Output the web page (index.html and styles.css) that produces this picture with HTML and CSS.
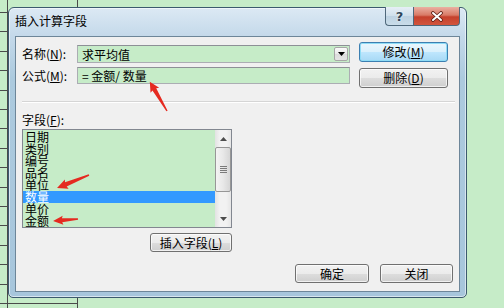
FILE: index.html
```html
<!DOCTYPE html>
<html lang="zh-CN">
<head>
  <meta charset="UTF-8">
  <meta name="viewport" content="width=device-width, initial-scale=1.0">
  <title>插入计算字段</title>
  <link rel="stylesheet" href="styles.css">
</head>
<body>
  <div class="window">
    <div class="titlebar">
      <span class="title">插入计算字段</span>
      <div class="caption">
        <span class="cap-help">?</span>
        <span class="cap-close">
          <svg width="14" height="11" viewBox="0 0 14 11">
            <path d="M3 2 L11 9 M11 2 L3 9" stroke="#5a1c12" stroke-width="3.6" stroke-linecap="round"/>
            <path d="M3 2 L11 9 M11 2 L3 9" stroke="#fff" stroke-width="2" stroke-linecap="round"/>
          </svg>
        </span>
      </div>
    </div>

    <div class="client">
      <div class="top">
        <div class="fields">
          <div class="row">
            <label>名称(<u>N</u>):</label>
            <div class="combo">
              <span>求平均值</span>
              <span class="drop">
                <svg width="7" height="4" viewBox="0 0 7 4"><polygon points="0,0 7,0 3.5,4" fill="#000"/></svg>
              </span>
            </div>
          </div>
          <div class="row">
            <label>公式(<u>M</u>):</label>
            <div class="textbox">= 金额/ 数量</div>
          </div>
        </div>
        <div class="side">
          <button class="btn default">修改(<u>M</u>)</button>
          <button class="btn">删除(<u>D</u>)</button>
        </div>
      </div>

      <div class="separator"></div>

      <div class="list-label">字段(<u>F</u>):</div>
      <div class="listbox">
        <div class="items">
          <div class="item">日期</div>
          <div class="item">类别</div>
          <div class="item">编号</div>
          <div class="item">品名</div>
          <div class="item">单位</div>
          <div class="item selected">数量</div>
          <div class="item">单价</div>
          <div class="item">金额</div>
        </div>
        <div class="scrollbar">
          <div class="sb-arrow">
            <svg width="7" height="4" viewBox="0 0 7 4"><polygon points="0,4 7,4 3.5,0" fill="#4d4d4d"/></svg>
          </div>
          <div class="sb-thumb"><span class="grip"></span></div>
          <div class="sb-track"></div>
          <div class="sb-arrow">
            <svg width="7" height="4" viewBox="0 0 7 4"><polygon points="0,0 7,0 3.5,4" fill="#4d4d4d"/></svg>
          </div>
        </div>
      </div>

      <div class="insert-row">
        <button class="btn insert">插入字段(<u>L</u>)</button>
      </div>

      <div class="bottom-row">
        <button class="btn ok">确定</button>
        <button class="btn close">关闭</button>
      </div>
    </div>
  </div>

  <!-- red annotation arrows -->
  <svg class="marks" width="504" height="308" viewBox="0 0 504 308">
    <g fill="#e52a20">
      <polygon transform="translate(167 111) rotate(-120.4)" points="0,-0.7 25,-2.2 24,-5 34,0 24,5 25,2.2 0,0.7"/>
      <polygon transform="translate(89 175) rotate(157.9)" points="0,-0.7 25,-2.2 24,-5 34.5,0 24,5 25,2.2 0,0.7"/>
      <polygon transform="translate(78 219) rotate(175.4)" points="0,-0.7 16,-2 15,-4.5 25,0 15,4.5 16,2 0,0.7"/>
    </g>
  </svg>
</body>
</html>
```

FILE: styles.css
```css
html, body {
  margin: 0;
}
body {
  position: relative;
  box-sizing: border-box;
  width: 504px;
  height: 308px;
  overflow: hidden;
  padding: 7px 0 0 8px;
  font-family: "Noto Sans CJK SC", "Noto Sans", sans-serif;
  font-size: 12px;
  color: #000;
  background:
    linear-gradient(#4a4a4a, #4a4a4a) 7px 0 / 1px 100% no-repeat,
    linear-gradient(#4a4a4a, #4a4a4a) 77px 0 / 1px 100% no-repeat,
    repeating-linear-gradient(to bottom, transparent 0 12px, #4a4a4a 12px 13px, transparent 13px 19.4px) 0 0 / 78px 100% no-repeat,
    #c6ecc8;
}
u {
  text-decoration: underline;
}

/* window frame */
.window {
  box-sizing: border-box;
  width: 459px;
  height: 291px;
  border: 1px solid #3c5a6e;
  border-radius: 6px 6px 5px 5px;
  padding: 0 6px 5px;
  background: linear-gradient(#dce9f4, #c4d9ea 28px, #accade 70px, #a7c6dc);
  box-shadow: inset 0 0 0 1px rgba(255, 255, 255, 0.55);
}
.titlebar {
  display: flex;
  align-items: flex-start;
  height: 28px;
}
.title {
  margin-top: 6px;
  line-height: 14px;
}
.caption {
  display: flex;
  margin-left: auto;
  margin-top: -1px;
  height: 19px;
}
.cap-help,
.cap-close {
  box-sizing: border-box;
  display: flex;
  align-items: center;
  justify-content: center;
  height: 19px;
  border: 1px solid #4f687b;
  border-top: none;
}
.cap-help {
  width: 28px;
  border-right: none;
  border-radius: 0 0 0 4px;
  background: linear-gradient(#e6eff6, #cfdfeb 50%, #bdd2e2 51%, #c9dce9);
  color: #2f465a;
  font-family: "DejaVu Sans", sans-serif;
  font-weight: bold;
  font-size: 13px;
  text-shadow: 0 0 2px #fff;
}
.cap-close {
  width: 47px;
  border-radius: 0 0 4px 0;
  background: linear-gradient(#eab0a2, #d97a66 45%, #c5402c 55%, #d2553d);
}

/* client area */
.client {
  box-sizing: border-box;
  height: 256px;
  border: 1px solid #6d8699;
  background: #f0f0f0;
  padding: 0 6px;
}
.top {
  display: flex;
  height: 51px;
}
.fields {
  width: 328px;
  padding-top: 8px;
}
.row {
  display: flex;
  align-items: center;
}
.row + .row {
  margin-top: 4px;
}
.row label {
  width: 55px;
  line-height: 14px;
}
.combo,
.textbox {
  box-sizing: border-box;
  width: 273px;
  border: 1px solid #abadb3;
  border-top-color: #8d9096;
  background: #c6ecc8;
  padding-left: 4px;
  line-height: 15px;
}
.combo {
  display: flex;
  align-items: center;
  height: 18px;
}
.textbox {
  height: 17px;
}
.drop {
  box-sizing: border-box;
  display: flex;
  align-items: center;
  justify-content: center;
  width: 14px;
  height: 14px;
  margin-left: auto;
  margin-right: 1px;
  border: 1px solid #a7a7a7;
  border-radius: 2px;
  background: linear-gradient(#fbfbfb, #e8e8e8 50%, #dcdcdc 51%, #e4e4e4);
}
.side {
  display: flex;
  flex-direction: column;
  gap: 6px;
  margin-left: 9px;
  padding-top: 5px;
}

/* buttons */
.btn {
  box-sizing: border-box;
  height: 19px;
  padding: 0;
  border: 1px solid #707070;
  border-radius: 3px;
  background: linear-gradient(#f2f2f2, #ebebeb 50%, #dddddd 51%, #cfcfcf);
  box-shadow: inset 0 0 0 1px rgba(255, 255, 255, 0.7);
  font: inherit;
  color: #000;
  line-height: 14px;
}
.side .btn {
  width: 89px;
  height: 20px;
}
.btn.default {
  border-color: #3c7fb1;
  box-shadow: inset 0 0 0 1px #8fdcf6;
  background: linear-gradient(#eaf6fd, #d9f0fc 50%, #bee6fd 51%, #a7d9f5);
}
.btn.insert {
  width: 82px;
}
.btn.ok {
  width: 74px;
}
.btn.close {
  width: 73px;
}

.separator {
  width: 433px;
  height: 0;
  margin-top: 13px;
  border-top: 1px solid #d5d5d5;
  border-bottom: 1px solid #fff;
}
.list-label {
  margin-top: 10px;
  line-height: 14px;
}

/* list box */
.listbox {
  display: flex;
  box-sizing: border-box;
  width: 210px;
  height: 99px;
  margin-top: 2px;
  border: 1px solid #828790;
  background: #c6ecc8;
}
.items {
  flex: 1;
  padding-top: 1px;
}
.item {
  height: 12px;
  padding-left: 2px;
  line-height: 12px;
  white-space: nowrap;
}
.item.selected {
  background: #3399ff;
  color: #fff;
}
.scrollbar {
  display: flex;
  flex-direction: column;
  width: 16px;
  background: linear-gradient(to right, #e2e2e2, #f2f2f2 30%, #f2f2f2 70%, #e6e6e6);
}
.sb-arrow {
  display: flex;
  align-items: center;
  justify-content: center;
  height: 17px;
}
.sb-thumb {
  box-sizing: border-box;
  display: flex;
  align-items: center;
  justify-content: center;
  height: 45px;
  border: 1px solid #979797;
  border-radius: 2px;
  background: linear-gradient(to right, #f4f4f4, #e8e8e8 50%, #d6d6d6);
}
.grip {
  width: 7px;
  height: 7px;
  background: repeating-linear-gradient(to bottom, #7a7a7a 0 1px, transparent 1px 2px);
}
.sb-track {
  flex: 1;
}

.insert-row {
  display: flex;
  justify-content: flex-end;
  width: 210px;
  margin-top: 5px;
}
.bottom-row {
  display: flex;
  justify-content: flex-end;
  gap: 11px;
  margin-top: 12px;
}

/* annotation overlay */
.marks {
  position: absolute;
  left: 0;
  top: 0;
  pointer-events: none;
}
```
